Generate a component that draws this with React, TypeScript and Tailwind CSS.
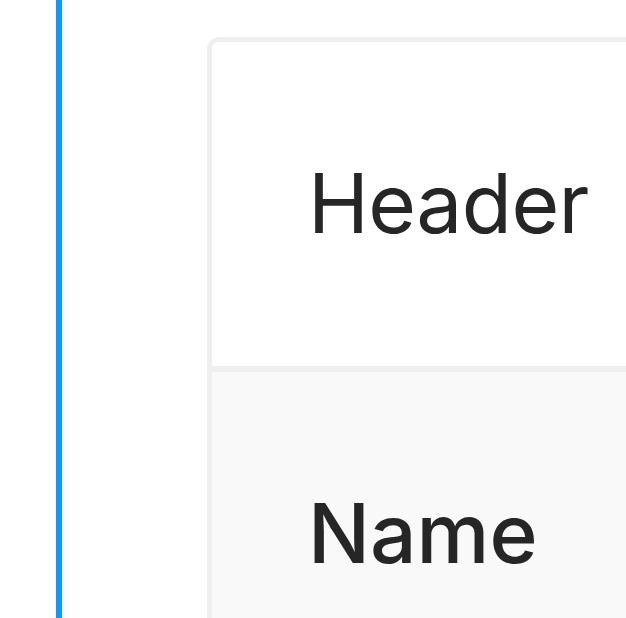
import React from 'react';

export default function App() {
  return (
    <div className="flex h-[618px] w-[626px] overflow-hidden bg-white" style={{ fontFamily: 'Inter, "Noto Sans", sans-serif' }}>
      {/* selection line */}
      <div className="ml-[56px] h-full w-[6px] shrink-0 bg-[#0d99ff]" />

      <div className="ml-[145px] mt-[37px] w-[600px] shrink-0 self-start overflow-hidden rounded-[12px] border-[5px] border-[#efefef]">
        <div className="flex h-[324px] items-center bg-white pl-[96px] text-[82px] leading-none tracking-[-0.6px] text-[#262626]">
          Header
        </div>
        <div className="h-[6px] bg-[#efefef]" />
        <div className="flex h-[324px] items-center bg-[#f9f9f9] pl-[96px] text-[82px] leading-none font-medium text-[#262626]">
          Name
        </div>
      </div>
    </div>
  );
}
